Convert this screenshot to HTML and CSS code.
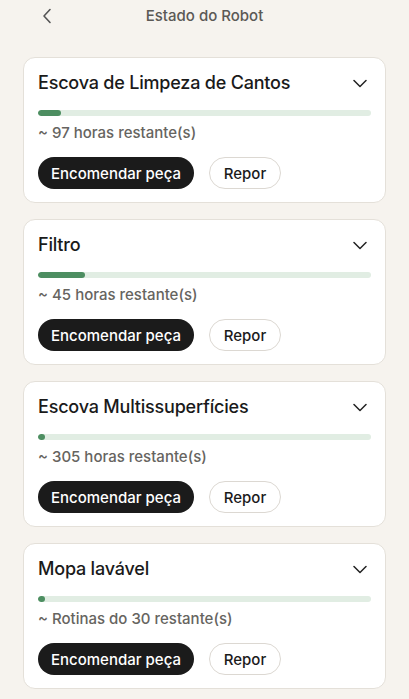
FILE: index.html
```html
<!DOCTYPE html>
<html lang="pt">
<head>
<meta charset="utf-8">
<link rel="stylesheet" href="styles.css">
</head>
<body>
<header class="topbar">
  <button class="back" aria-label="Voltar">
    <svg width="10" height="16" viewBox="0 0 10 16"><path d="M8 1.5 L2 8 L8 14.5" fill="none" stroke="#555" stroke-width="1.6" stroke-linecap="round" stroke-linejoin="round"/></svg>
  </button>
  <h1 class="title">Estado do Robot</h1>
</header>
<main class="list">
  <section class="card">
    <div class="card-head">
      <h2 class="name">Escova de Limpeza de Cantos</h2>
      <svg class="chev" width="14" height="9" viewBox="0 0 14 9"><path d="M1 1.5 L7 7.5 L13 1.5" fill="none" stroke="#222" stroke-width="1.5" stroke-linecap="round" stroke-linejoin="round"/></svg>
    </div>
    <div class="bar"><div class="fill" style="width:7%"></div></div>
    <p class="remain">~ 97 horas restante(s)</p>
    <div class="actions"><button class="btn primary">Encomendar peça</button><button class="btn ghost">Repor</button></div>
  </section>
  <section class="card">
    <div class="card-head">
      <h2 class="name">Filtro</h2>
      <svg class="chev" width="14" height="9" viewBox="0 0 14 9"><path d="M1 1.5 L7 7.5 L13 1.5" fill="none" stroke="#222" stroke-width="1.5" stroke-linecap="round" stroke-linejoin="round"/></svg>
    </div>
    <div class="bar"><div class="fill" style="width:14%"></div></div>
    <p class="remain">~ 45 horas restante(s)</p>
    <div class="actions"><button class="btn primary">Encomendar peça</button><button class="btn ghost">Repor</button></div>
  </section>
  <section class="card">
    <div class="card-head">
      <h2 class="name">Escova Multissuperfícies</h2>
      <svg class="chev" width="14" height="9" viewBox="0 0 14 9"><path d="M1 1.5 L7 7.5 L13 1.5" fill="none" stroke="#222" stroke-width="1.5" stroke-linecap="round" stroke-linejoin="round"/></svg>
    </div>
    <div class="bar"><div class="fill dot"></div></div>
    <p class="remain">~ 305 horas restante(s)</p>
    <div class="actions"><button class="btn primary">Encomendar peça</button><button class="btn ghost">Repor</button></div>
  </section>
  <section class="card">
    <div class="card-head">
      <h2 class="name">Mopa lavável</h2>
      <svg class="chev" width="14" height="9" viewBox="0 0 14 9"><path d="M1 1.5 L7 7.5 L13 1.5" fill="none" stroke="#222" stroke-width="1.5" stroke-linecap="round" stroke-linejoin="round"/></svg>
    </div>
    <div class="bar"><div class="fill dot"></div></div>
    <p class="remain">~ Rotinas do 30 restante(s)</p>
    <div class="actions"><button class="btn primary">Encomendar peça</button><button class="btn ghost">Repor</button></div>
  </section>
</main>
</body>
</html>
```

FILE: styles.css
```css
* { box-sizing: border-box; }
html, body { margin: 0; padding: 0; }
body {
  background: #f6f3ee;
  font-family: Inter, "Noto Sans", "Liberation Sans", sans-serif;
  color: #1b1b1b;
  height: 699px;
  overflow: hidden;
}
.topbar {
  position: relative;
  height: 32px;
  display: flex;
  align-items: center;
  justify-content: center;
}
.back {
  position: absolute;
  left: 42px;
  top: 8px;
  border: 0;
  background: none;
  padding: 0;
  width: 10px;
  height: 16px;
  display: flex;
}
.title {
  margin: 0;
  font-size: 15px;
  font-weight: 500;
  color: #5b5955;
  line-height: 20px;
}
.list {
  padding: 25px 23px 0;
  display: flex;
  flex-direction: column;
  gap: 16px;
}
.card {
  background: #fff;
  border: 1px solid #e4e0d9;
  border-radius: 12px;
  padding: 13px 14px 13px 14px;
}
.card-head {
  display: flex;
  align-items: center;
  justify-content: space-between;
  height: 24px;
}
.name {
  margin: 0;
  font-size: 18px;
  font-weight: 500;
  line-height: 24px;
  color: #1a1a1a;
  letter-spacing: -0.2px;
}
.chev { margin-right: 4px; }
.bar {
  margin-top: 15px;
  height: 6px;
  border-radius: 3px;
  background: #e1ede3;
  overflow: hidden;
}
.fill {
  height: 100%;
  background: #4d8e61;
  border-radius: 3px;
}
.fill.dot { width: 7px; }
.remain {
  margin: 7px 0 0;
  font-size: 15px;
  font-weight: 500;
  line-height: 20px;
  color: #666460;
}
.actions {
  margin-top: 14px;
  display: flex;
  gap: 15px;
}
.btn {
  height: 32px;
  border-radius: 16px;
  font-family: inherit;
  font-size: 15px;
  font-weight: 500;
  padding: 0;
  white-space: nowrap;
  cursor: pointer;
}
.primary {
  background: #1b1b1b;
  color: #fff;
  border: 0;
  width: 156px;
}
.ghost {
  background: #fff;
  color: #1b1b1b;
  border: 1px solid #dcd8d2;
  width: 72px;
}
```
